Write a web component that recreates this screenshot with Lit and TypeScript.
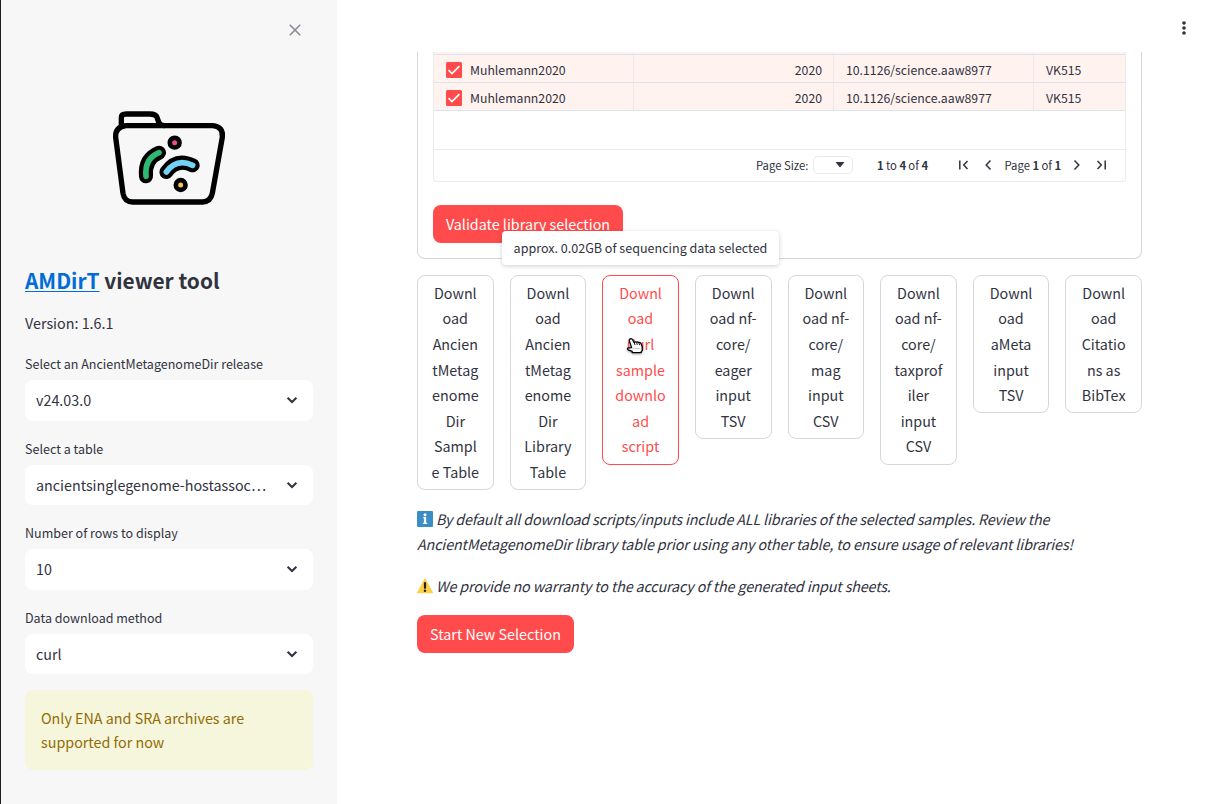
import { LitElement, html, css, svg } from "lit";
import { customElement } from "lit/decorators.js";

const SELECTS = [
  { label: "Select an AncientMetagenomeDir release", value: "v24.03.0" },
  { label: "Select a table", value: "ancientsinglegenome-hostassoc…" },
  { label: "Number of rows to display", value: "10" },
  { label: "Data download method", value: "curl" },
];

const ROWS = [
  { name: "Muhlemann2020", year: "2020", doi: "10.1126/science.aaw8977", sample: "VK515" },
  { name: "Muhlemann2020", year: "2020", doi: "10.1126/science.aaw8977", sample: "VK515" },
];

const DOWNLOADS = [
  ["Downl", "oad", "Ancien", "tMetag", "enome", "Dir", "Sampl", "e Table"],
  ["Downl", "oad", "Ancien", "tMetag", "enome", "Dir", "Library", "Table"],
  ["Downl", "oad", "Curl", "sample", "downlo", "ad", "script"],
  ["Downl", "oad nf-", "core/", "eager", "input", "TSV"],
  ["Downl", "oad nf-", "core/", "mag", "input", "CSV"],
  ["Downl", "oad nf-", "core/", "taxprof", "iler", "input", "CSV"],
  ["Downl", "oad", "aMeta", "input", "TSV"],
  ["Downl", "oad", "Citatio", "ns as", "BibTex"],
];
const HOVERED = 2;

@customElement("side-panel")
export class SidePanel extends LitElement {
  static styles = css`
    :host { display: block; box-sizing: border-box; width: 337px; height: 804px; flex: none;
      background: #f7f7f7; border-left: 1px solid #1d1f22; padding: 0 24px; }
    .top { height: 108px; display: flex; justify-content: flex-end; padding-top: 23px; box-sizing: border-box; padding-right: 11px; }
    svg { display: block; }
    .logo { margin: 0 auto; width: 120px; height: 100px; position: relative; left: 1px; }
    h2 { margin: 58px 0 0; font-size: 20.87px; line-height: 28px; font-weight: 600; white-space: nowrap; }
    a { color: #006cd6; text-decoration: underline; text-underline-offset: 2px; text-decoration-thickness: 1px; }
    .version { margin-top: 16px; height: 26px; line-height: 25px; }
    .field { height: 68.6px; margin-bottom: 16px; }
    .fields { padding-top: 16px; }
    .label { height: 28px; line-height: 24.6px; font-size: 12.53px; white-space: nowrap; }
    .select { height: 40.6px; box-sizing: border-box; background: #fff; border-radius: 8px; display: flex;
      align-items: center; justify-content: space-between; padding: 0 13px 0 11px; white-space: nowrap; line-height: 24px; }
    .field:last-child span { padding-bottom: 1px; }
    .alert { background: #f6f6dc; color: #926c05; border-radius: 8px; padding: 16px; line-height: 24px; height: 79.4px; box-sizing: border-box; }
  `;
  render() {
    return html`
      <div class="top">
        <svg width="14" height="14" viewBox="0 0 14 14"><path d="M1.8 1.8 12.2 12.2M12.2 1.8 1.8 12.2" stroke="#8a8c98" stroke-width="1.6" fill="none"/></svg>
      </div>
      <svg class="logo" viewBox="330 324 360 300" fill="none" stroke="#000" stroke-linecap="round" stroke-linejoin="round">
        <path d="M364 378V353Q364 342 379 342H450Q467 342 471 352L476 366Q480 376 493 377" stroke-width="16"/>
        <path d="M378 377H638Q670 380 667 412L637 580Q632 605 608 606H398Q373 605 369 580L347 412Q345 381 378 377Z" stroke-width="16"/>
        <path d="M438 529Q433 476 477 458" stroke-width="42"/>
        <path d="M438 529Q433 476 477 458" stroke="#2eb872" stroke-width="17"/>
        <path d="M499 516Q530 473 578 496" stroke-width="42"/>
        <path d="M499 516Q530 473 578 496" stroke="#71d3f4" stroke-width="17"/>
        <circle cx="524" cy="428" r="14.5" fill="#ee4b91" stroke-width="14"/>
        <circle cx="542" cy="555" r="14.5" fill="#fcc24f" stroke-width="14"/>
      </svg>
      <h2><a>AMDirT</a> viewer tool</h2>
      <div class="version">Version: 1.6.1</div>
      <div class="fields">
        ${SELECTS.map((s) => html`
          <div class="field">
            <div class="label">${s.label}</div>
            <div class="select"><span>${s.value}</span>
              <svg width="16" height="16" viewBox="0 0 16 16"><path d="M3.6 5.7 8 10 12.4 5.7" stroke="#31333f" stroke-width="2" fill="none"/></svg>
            </div>
          </div>`)}
      </div>
      <div class="alert">Only ENA and SRA archives are<br>supported for now</div>
    `;
  }
}

@customElement("library-grid")
export class LibraryGrid extends LitElement {
  static styles = css`
    :host { display: block; box-sizing: border-box; height: 130px; border: 1px solid #eaebec; border-top: 0;
      border-radius: 0 0 4px 4px; font-size: 12.28px; }
    .row { display: grid; grid-template-columns: 200px 200px 200px 1fr; height: 28px; box-sizing: border-box;
      background: #fff2ef; border-bottom: 1px solid #dae3ee; line-height: 24px; white-space: nowrap; }
    .first { height: 3px; }
    .cell { border-right: 1px solid #ebe9ec; padding: 3px 12px 0 12px; display: flex; align-items: center; gap: 8px; }
    .first .cell { padding: 0; }
    .cell:last-child { border-right: 0; }
    .num { justify-content: flex-end; padding-right: 11px; }
    .text { line-height: 24px; height: 24px; }
    svg { display: block; flex: none; }
    .rest { height: 38px; border-bottom: 1px solid #eaebec; }
    .pager { height: 30px; display: flex; align-items: center; font-size: 11.3px; line-height: 30px; white-space: nowrap; padding-left: 322px; }
    .size { width: 38px; height: 16px; border: 1px solid #e8e9eb; border-radius: 5px; margin-left: 5px; display: flex; justify-content: flex-end; align-items: center; }
    .size svg { margin-right: 7px; }
    .label { width: 52px; }
    .range { margin-left: 24px; width: 52px; }
    .nav { margin-left: 27px; display: flex; align-items: center; }
    b { font-weight: 600; letter-spacing: -.25px; }
    .of { margin: 0 7.5px 0 8.5px; width: 57px; }
    .next { margin-right: 8px; }
    .prev { margin-left: 8px; }
  `;
  render() {
    const icon = (d: string, cls = "") => html`<svg class=${cls} width="16" height="16" viewBox="0 0 16 16">${svg`<path d=${d} stroke="#31333f" stroke-width="1.5" fill="none"/>`}</svg>`;
    return html`
      <div class="row first"><div class="cell"></div><div class="cell"></div><div class="cell"></div><div class="cell"></div></div>
      ${ROWS.map((r) => html`
        <div class="row">
          <div class="cell">
            <svg width="16" height="16" viewBox="0 0 16 16"><rect width="16" height="16" rx="1.5" fill="#ff4b4b"/><path d="M2.5 8.2 6 11.6 13.4 4.2" stroke="#fff" stroke-width="1.7" fill="none"/></svg>
            <span class="text">${r.name}</span>
          </div>
          <div class="cell num"><span class="text">${r.year}</span></div>
          <div class="cell"><span class="text">${r.doi}</span></div>
          <div class="cell"><span class="text">${r.sample}</span></div>
        </div>`)}
      <div class="rest"></div>
      <div class="pager">
        <span class="label">Page Size:</span>
        <div class="size"><svg width="10" height="6" viewBox="0 0 10 6"><path d="M.5 0h9L5 5.5Z" fill="#31333f"/></svg></div>
        <span class="range"><b>1</b> to <b>4</b> of <b>4</b></span>
        <div class="nav">
          ${icon("M3.8 3.5v9M11.5 4 7.7 8l3.8 4")}
          ${icon("M10.5 3.5 6.2 8l4.3 4.5", "prev")}
          <span class="of">Page <b>1</b> of <b>1</b></span>
          ${icon("M5.5 3.5 9.8 8l-4.3 4.5", "next")}
          ${icon("M12.2 3.5v9M4.5 4 8.3 8l-3.8 4")}
        </div>
      </div>
    `;
  }
}

@customElement("app-root")
export class AppRoot extends LitElement {
  static styles = css`
    :host { display: flex; width: 1215px; height: 804px; overflow: hidden; background: #fff; color: #31333f;
      font-family: "Noto Sans CJK SC", "Noto Sans", sans-serif; font-size: 14.32px; }
    main { flex: 1; padding: 0 73px 0 80px; position: relative; }
    .header { height: 52px; }
    .menu { position: absolute; right: 27px; top: 20px; }
    .card { position: relative; box-sizing: border-box; height: 207px; border: 1px solid #d6d7da; border-top: 0;
      border-radius: 0 0 8px 8px; padding: 0 15px; }
    .primary { display: flex; align-items: center; justify-content: center; height: 38px; border-radius: 8px;
      background: #ff4b4b; color: #fff; white-space: nowrap; line-height: 36px; box-sizing: border-box; }
    .validate { width: 190px; margin-top: 23px; padding-bottom: 1px; }
    .new { width: 157px; }
    .tip { position: absolute; left: 84px; top: 179px; width: 277px; height: 34px; background: #fff; border-radius: 4px;
      box-shadow: 0 1px 4px rgba(14, 50, 30, .22); display: flex; align-items: center; justify-content: center;
      font-size: 12.55px; line-height: 32px; white-space: nowrap; z-index: 1; }
    .downloads { display: grid; grid-template-columns: repeat(8, 1fr); gap: 16px; align-items: start; height: 214.4px; margin-top: 16.4px; }
    .dl { border: 1px solid #d6d7da; border-radius: 8px; padding: 4px 0; text-align: center; line-height: 25.6px; white-space: nowrap; }
    .dl span { display: block; position: relative; top: -.6px; }
    .hover { border-color: #ff4b4b; color: #ff4b4b; }
    .hand { position: absolute; left: 289px; top: 337px; filter: drop-shadow(0 1px 1px rgba(0, 0, 0, .35)); }
    p { margin: 0 0 16px; line-height: 25.6px; font-style: italic; white-space: nowrap; }
    .l { display: flex; align-items: center; gap: 3px; height: 25.6px; }
    .notes { padding-top: 16px; }
    .l1 { letter-spacing: -.17px; }
    .l2 { letter-spacing: -.12px; }
    .l3 { letter-spacing: -.14px; }
    svg { display: block; flex: none; }
  `;
  render() {
    return html`
      <side-panel></side-panel>
      <main>
        <div class="header"></div>
        <svg class="menu" width="8" height="16" viewBox="0 0 8 16" fill="#31333f"><circle cx="4" cy="3" r="1.8"/><circle cx="4" cy="8" r="1.8"/><circle cx="4" cy="13" r="1.8"/></svg>
        <div class="card">
          <library-grid></library-grid>
          <div class="primary validate">Validate library selection</div>
          <div class="tip">approx. 0.02GB of sequencing data selected</div>
        </div>
        <div class="downloads">
          ${DOWNLOADS.map((lines, i) => html`<div class="dl ${i === HOVERED ? "hover" : ""}">${lines.map((l) => html`<span>${l}</span>`)}</div>`)}
        </div>
        <svg class="hand" width="18" height="18" viewBox="0 0 18 18">
          <path d="M4.2 1.8Q5.8 1.2 6.6 2.8L8 5.4Q9.2 4.4 10.3 5.3 11.6 4.5 12.7 5.6 14.2 5 15 6.6L16.2 9.8V13.6L15.2 14.6V15.6H6.2V14.4L2.2 12.8Q1 12 1.8 11L5.6 10.6 3.3 3.6Q3 2.3 4.2 1.8Z" fill="#fff" stroke="#000" stroke-width="1.3" stroke-linejoin="round"/>
          <path d="M6.5 11.5H14.5" stroke="#888" stroke-width=".8" stroke-dasharray="1 1"/>
          <path d="M8.2 5.5 9 8M10.6 5.6 11.3 8M13 6 13.6 8.2" stroke="#000" stroke-width=".9"/>
        </svg>
        <div class="notes">
          <p>
            <span class="l"><svg width="16" height="16" viewBox="0 0 16 16"><rect width="16" height="16" rx="1" fill="#3b8dc8"/><path d="M6.3 6H9.2V11.8H10.2V13H5.9V11.8H6.9V7.2H6.3Z" fill="#fff"/><circle cx="8" cy="3.8" r="1.5" fill="#fff"/></svg><span class="l1">By default all download scripts/inputs include ALL libraries of the selected samples. Review the</span></span>
            <span class="l"><span class="l2">AncientMetagenomeDir library table prior using any other table, to ensure usage of relevant libraries!</span></span>
          </p>
          <p><span class="l"><svg width="16" height="16" viewBox="0 0 16 16"><path d="M8 1.2 15.2 14.6H.8Z" fill="#ffcf4a" stroke="#ffcf4a" stroke-width="1.4" stroke-linejoin="round"/><path d="M8 5V9.8" stroke="#222" stroke-width="2.2" stroke-linecap="round"/><circle cx="8" cy="12.7" r="1.2" fill="#222"/></svg><span class="l3">We provide no warranty to the accuracy of the generated input sheets.</span></span></p>
        </div>
        <div class="primary new">Start New Selection</div>
      </main>
    `;
  }
}
